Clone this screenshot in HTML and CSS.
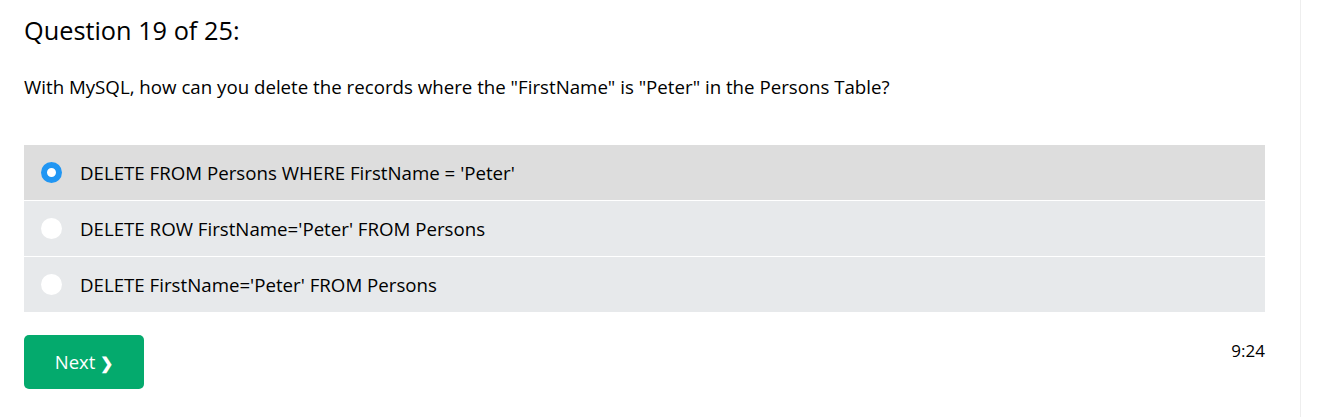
FILE: index.html
```html
<!DOCTYPE html>
<html>
<head>
<meta charset="utf-8">
<link rel="stylesheet" href="styles.css">
</head>
<body>
<div class="page">
  <main class="quiz">
    <h2 class="qnum">Question 19 of 25:</h2>
    <p class="qtext">With MySQL, how can you delete the records where the "FirstName" is "Peter" in the Persons Table?</p>
    <div class="options">
      <label class="opt selected"><span class="radio checked"></span><span class="otext">DELETE FROM Persons WHERE FirstName = 'Peter'</span></label>
      <label class="opt"><span class="radio"></span><span class="otext">DELETE ROW FirstName='Peter' FROM Persons</span></label>
      <label class="opt"><span class="radio"></span><span class="otext">DELETE FirstName='Peter' FROM Persons</span></label>
    </div>
    <div class="footer">
      <button class="next">Next <span class="chev">&#10095;</span></button>
      <span class="timer">9:24</span>
    </div>
  </main>
  <aside class="side"></aside>
</div>
</body>
</html>
```
FILE: styles.css
```css
html, body { margin: 0; padding: 0; background: #fff; }
body { font-family: "Open Sans", "Noto Sans", sans-serif; color: #000; }
.page { display: flex; height: 417px; }
.quiz { width: 1241px; padding: 0 35px 0 24px; border-right: 1px solid #eeeeee; }
.side { flex: 1; }
.qnum { font-size: 25.3px; font-weight: 400; margin: 14px 0 0; line-height: 32px; }
.qtext { font-size: 18.7px; margin: 28px 0 0; line-height: 26px; }
.options { margin-top: 45px; display: flex; flex-direction: column; gap: 1px; }
.opt { display: flex; align-items: center; height: 55px; background: #e7e9eb; padding-left: 17px; font-size: 18.7px; }
.opt.selected { background: #dddddd; }
.radio { width: 21px; height: 21px; border-radius: 50%; background: #fff; box-sizing: border-box; flex: none; }
.radio.checked { background: #fff; border: 6px solid #2196f3; }
.otext { margin-left: 18px; }
.footer { display: flex; justify-content: space-between; align-items: flex-start; margin-top: 23px; }
.next { width: 120px; height: 54px; background: #04aa6d; color: #fff; border: none; border-radius: 5px; font-family: inherit; font-size: 18.5px; padding: 0 0 2px; }
.chev { font-size: 16px; font-weight: 700; }
.timer { font-size: 17px; margin-top: 4px; }
```
